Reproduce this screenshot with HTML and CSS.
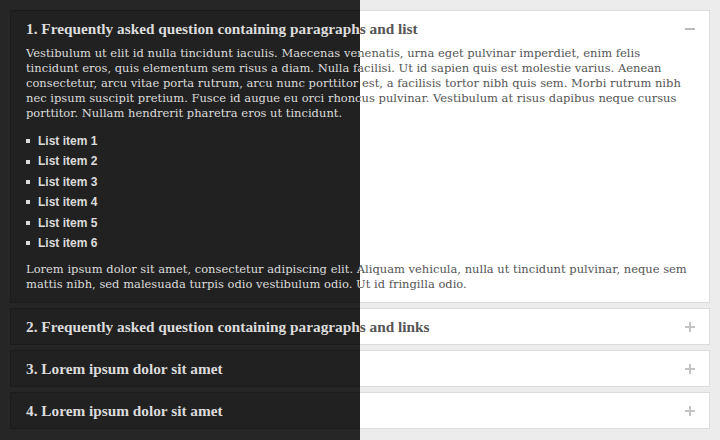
FILE: index.html
```html
<!DOCTYPE html>
<html lang="en">
<head>
<meta charset="utf-8">
<title>FAQ accordion</title>
<link rel="stylesheet" href="styles.css">
</head>
<body>
<div class="stage">
  <div class="theme light">
    <div class="item open">
      <div class="head"><span class="title">1. Frequently asked question containing paragraphs and list</span><span class="icon minus"></span></div>
      <div class="body">
        <p>Vestibulum ut elit id nulla tincidunt iaculis. Maecenas venenatis, urna eget pulvinar imperdiet, enim felis tincidunt eros, quis elementum sem risus a diam. Nulla facilisi. Ut id sapien quis est molestie varius. Aenean consectetur, arcu vitae porta rutrum, arcu nunc porttitor est, a facilisis tortor nibh quis sem. Morbi rutrum nibh nec ipsum suscipit pretium. Fusce id augue eu orci rhoncus pulvinar. Vestibulum at risus dapibus neque cursus porttitor. Nullam hendrerit pharetra eros ut tincidunt.</p>
        <ul class="list">
          <li>List item 1</li><li>List item 2</li><li>List item 3</li><li>List item 4</li><li>List item 5</li><li>List item 6</li>
        </ul>
        <p>Lorem ipsum dolor sit amet, consectetur adipiscing elit. Aliquam vehicula, nulla ut tincidunt pulvinar, neque sem mattis nibh, sed malesuada turpis odio vestibulum odio. Ut id fringilla odio.</p>
      </div>
    </div>
    <div class="item"><div class="head"><span class="title">2. Frequently asked question containing paragraphs and links</span><span class="icon plus"></span></div></div>
    <div class="item"><div class="head"><span class="title">3. Lorem ipsum dolor sit amet</span><span class="icon plus"></span></div></div>
    <div class="item"><div class="head"><span class="title">4. Lorem ipsum dolor sit amet</span><span class="icon plus"></span></div></div>
  </div>
  <div class="theme dark" aria-hidden="true">
    <div class="item open">
      <div class="head"><span class="title">1. Frequently asked question containing paragraphs and list</span><span class="icon minus"></span></div>
      <div class="body">
        <p>Vestibulum ut elit id nulla tincidunt iaculis. Maecenas venenatis, urna eget pulvinar imperdiet, enim felis tincidunt eros, quis elementum sem risus a diam. Nulla facilisi. Ut id sapien quis est molestie varius. Aenean consectetur, arcu vitae porta rutrum, arcu nunc porttitor est, a facilisis tortor nibh quis sem. Morbi rutrum nibh nec ipsum suscipit pretium. Fusce id augue eu orci rhoncus pulvinar. Vestibulum at risus dapibus neque cursus porttitor. Nullam hendrerit pharetra eros ut tincidunt.</p>
        <ul class="list">
          <li>List item 1</li><li>List item 2</li><li>List item 3</li><li>List item 4</li><li>List item 5</li><li>List item 6</li>
        </ul>
        <p>Lorem ipsum dolor sit amet, consectetur adipiscing elit. Aliquam vehicula, nulla ut tincidunt pulvinar, neque sem mattis nibh, sed malesuada turpis odio vestibulum odio. Ut id fringilla odio.</p>
      </div>
    </div>
    <div class="item"><div class="head"><span class="title">2. Frequently asked question containing paragraphs and links</span><span class="icon plus"></span></div></div>
    <div class="item"><div class="head"><span class="title">3. Lorem ipsum dolor sit amet</span><span class="icon plus"></span></div></div>
    <div class="item"><div class="head"><span class="title">4. Lorem ipsum dolor sit amet</span><span class="icon plus"></span></div></div>
  </div>
</div>
</body>
</html>
```
FILE: styles.css
```css
html, body {
  margin: 0;
  padding: 0;
}
body {
  font-family: "DejaVu Serif", "Liberation Serif", serif;
}
.stage {
  position: relative;
  width: 720px;
  height: 440px;
  overflow: hidden;
}
.theme {
  padding: 10px 10px 0 10px;
  height: 440px;
  box-sizing: border-box;
}
.light {
  background: #ececec;
  color: #555;
}
.dark {
  position: absolute;
  inset: 0;
  background: #262626;
  color: #dcdcdc;
  clip-path: inset(0 360px 0 0);
}
.item {
  border: 1px solid #dcdcdc;
  background: #fff;
  margin-bottom: 5px;
}
.dark .item {
  border-color: #1b1b1b;
  background: #212121;
}
.head {
  display: flex;
  align-items: center;
  justify-content: space-between;
  padding: 10px 14px 10px 15px;
  height: 15px;
}
.title {
  font-family: "Liberation Serif", "Times New Roman", serif;
  font-weight: bold;
  font-size: 15.3px;
  line-height: 15px;
}
.icon {
  position: relative;
  width: 10px;
  height: 10px;
}
.icon::before,
.icon::after {
  content: "";
  position: absolute;
  background: #c4c4c4;
}
.icon::before {
  left: 0;
  right: 0;
  top: 4px;
  height: 2px;
}
.plus::after {
  top: 0;
  bottom: 0;
  left: 4px;
  width: 2px;
}
.minus::before {
  background: #bbb;
}
.body {
  padding: 0 15px 10px 15px;
  font-size: 11.5px;
  line-height: 15px;
}
.body p {
  margin: 0;
}
.list {
  list-style: none;
  margin: 10px 0 9px 0;
  padding: 0;
  font-family: "Liberation Sans", Arial, sans-serif;
  font-weight: bold;
  font-size: 12px;
  line-height: 20.4px;
}
.list li {
  display: flex;
  align-items: center;
}
.list li::before {
  content: "";
  width: 4px;
  height: 4px;
  margin: 0 8px 0 0;
  background: currentColor;
}
```
